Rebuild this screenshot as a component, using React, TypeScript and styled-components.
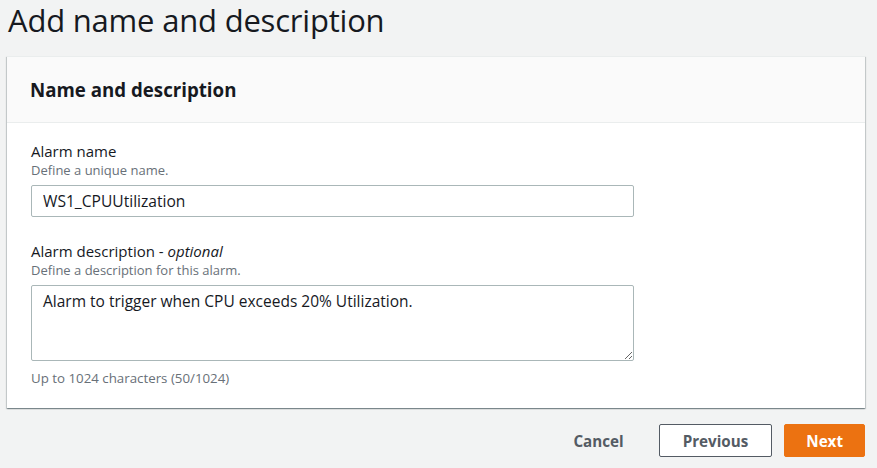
import React from 'react';
import styled, { createGlobalStyle } from 'styled-components';

const GlobalStyle = createGlobalStyle`
    html, body {
        margin: 0;
        padding: 0;
        background: #f2f3f3;
    }
    body {
        font-family: "Open Sans", "Noto Sans", Arial, sans-serif;
        color: #16191f;
    }
`;

const Page = styled.div`
    width: 877px;
    height: 468px;
    padding: 0 12px 0 7px;
    box-sizing: border-box;
    display: flex;
    flex-direction: column;
    overflow: hidden;
`;

const Heading = styled.h1`
    margin: 0;
    padding: 0 0 0 1px;
    height: 56px;
    flex-shrink: 0;
    font-size: 31px;
    font-weight: 400;
    line-height: 40px;
    letter-spacing: -0.2px;
    color: #16191f;
`;

const Card = styled.section`
    background: #fff;
    box-shadow: 0 1px 1px 0 rgba(0, 28, 36, 0.3), 1px 1px 1px 0 rgba(0, 28, 36, 0.15), -1px 1px 1px 0 rgba(0, 28, 36, 0.15);
    border-top: 1px solid #eaeded;
`;

const CardHeader = styled.header`
    background: #fafafa;
    border-bottom: 1px solid #eaeded;
    height: 65px;
    padding: 0 23px;
    display: flex;
    align-items: center;
`;

const CardTitle = styled.h2`
    margin: 0;
    font-size: 18.7px;
    font-weight: 700;
    color: #16191f;
`;

const CardBody = styled.div`
    padding: 18px 24px 21px;
    display: flex;
    flex-direction: column;
    gap: 24px;
`;

const Field = styled.div`
    display: flex;
    flex-direction: column;
`;

const Label = styled.label`
    font-size: 15px;
    line-height: 20px;
    color: #16191f;
    em {
        font-style: italic;
    }
`;

const Hint = styled.div<{ $below?: boolean }>`
    font-size: ${p => (p.$below ? '13.3px' : '13px')};
    line-height: 18px;
    color: #687078;
    margin-top: ${p => (p.$below ? '8px' : '0')};
    margin-bottom: ${p => (p.$below ? '0' : '6px')};
`;

const TextInput = styled.input`
    width: 603px;
    height: 32px;
    box-sizing: border-box;
    border: 1px solid #aab7b8;
    border-radius: 2px;
    padding: 0 11px;
    font-family: inherit;
    font-size: 15.6px;
    color: #16191f;
    background: #fff;
    outline: none;
`;

const TextArea = styled.textarea`
    width: 603px;
    height: 76px;
    box-sizing: border-box;
    border: 1px solid #aab7b8;
    border-radius: 2px;
    padding: 4px 11px;
    font-family: inherit;
    font-size: 15.5px;
    line-height: 22px;
    color: #16191f;
    background: #fff;
    outline: none;
    resize: vertical;
    display: block;
`;

const Actions = styled.div`
    display: flex;
    justify-content: flex-end;
    align-items: center;
    gap: 12px;
    padding-top: 16px;
`;

const Button = styled.button<{ $variant?: 'link' | 'normal' | 'primary' }>`
    height: 33px;
    box-sizing: border-box;
    font-family: inherit;
    font-size: 15.2px;
    font-weight: 700;
    border-radius: 2px;
    cursor: pointer;
    padding: 0 ${p => (p.$variant === 'link' ? '22px' : p.$variant === 'primary' ? '21px' : '23px')};
    border: 1px solid ${p => (p.$variant === 'primary' ? '#ec7211' : p.$variant === 'normal' ? '#545b64' : 'transparent')};
    background: ${p => (p.$variant === 'primary' ? '#ec7211' : p.$variant === 'normal' ? '#fff' : 'transparent')};
    color: ${p => (p.$variant === 'primary' ? '#fff' : '#545b64')};
`;

const App: React.FC = () => {
    return (
        <>
            <GlobalStyle />
            <Page>
                <Heading>Add name and description</Heading>
                <Card>
                    <CardHeader>
                        <CardTitle>Name and description</CardTitle>
                    </CardHeader>
                    <CardBody>
                        <Field>
                            <Label>Alarm name</Label>
                            <Hint>Define a unique name.</Hint>
                            <TextInput defaultValue="WS1_CPUUtilization" />
                        </Field>
                        <Field>
                            <Label>
                                Alarm description - <em>optional</em>
                            </Label>
                            <Hint>Define a description for this alarm.</Hint>
                            <TextArea defaultValue="Alarm to trigger when CPU exceeds 20% Utilization." />
                            <Hint $below>Up to 1024 characters (50/1024)</Hint>
                        </Field>
                    </CardBody>
                </Card>
                <Actions>
                    <Button $variant="link">Cancel</Button>
                    <Button $variant="normal">Previous</Button>
                    <Button $variant="primary">Next</Button>
                </Actions>
            </Page>
        </>
    );
};

export default App;
